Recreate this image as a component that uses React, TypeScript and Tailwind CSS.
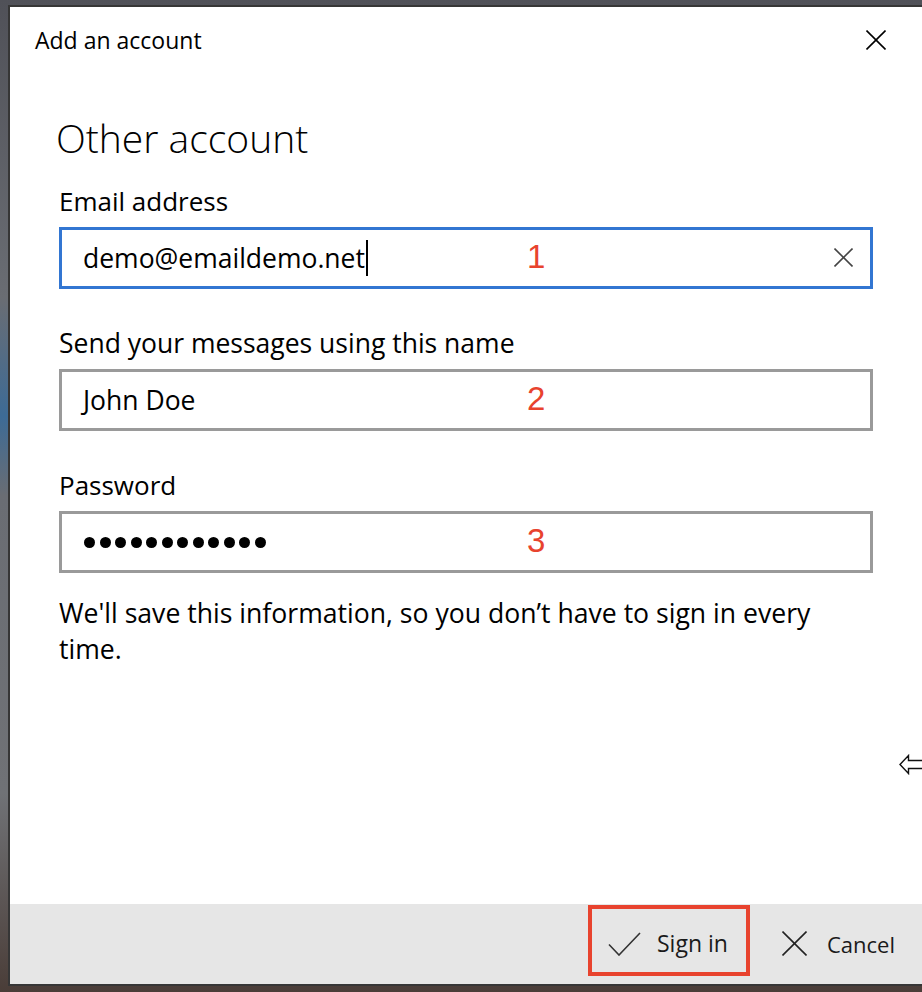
import React from "react";

const font = { fontFamily: '"Open Sans", "Noto Sans", sans-serif' };

function XIcon({ size, stroke, color }: { size: number; stroke: number; color: string }) {
  return (
    <svg width={size} height={size} viewBox={`0 0 ${size} ${size}`} fill="none">
      <line x1="0.5" y1="0.5" x2={size - 0.5} y2={size - 0.5} stroke={color} strokeWidth={stroke} />
      <line x1={size - 0.5} y1="0.5" x2="0.5" y2={size - 0.5} stroke={color} strokeWidth={stroke} />
    </svg>
  );
}

function Field({
  value,
  focused,
  num,
  password,
}: {
  value?: string;
  focused?: boolean;
  num: string;
  password?: boolean;
}) {
  return (
    <div
      className={`relative h-[62px] border-[3px] ${
        focused ? "border-[#3276d2]" : "border-[#9a9a9a]"
      } flex items-center pl-[21px] bg-white`}
    >
      {password ? (
        <div className="flex items-center gap-[4.5px] pl-[1px]">
          {Array.from({ length: 12 }).map((_, i) => (
            <div key={i} className="w-[11px] h-[11px] rounded-full bg-black" />
          ))}
        </div>
      ) : (
        <div className="flex items-center">
          <span className="text-[26.5px] text-black leading-none" style={font}>
            {value}
          </span>
          {focused && <span className="ml-[1px] w-[2px] h-[36px] bg-black" />}
        </div>
      )}
      <span
        className="absolute left-[465px] top-[10px] text-[33px] leading-none text-[#e8432e]"
        style={{ fontFamily: '"Liberation Sans", Arial, sans-serif' }}
      >
        {num}
      </span>
      {focused && (
        <div className="absolute right-[17px] top-[18px]">
          <XIcon size={19} stroke={1.6} color="#444" />
        </div>
      )}
    </div>
  );
}

export default function App() {
  return (
    <div
      className="relative w-[922px] h-[992px] overflow-hidden pt-[5px] pl-[8px]"
      style={{
        background:
          "linear-gradient(180deg, #505158 0%, #6a6d73 30%, #3d6b96 42%, #6a6d73 50%, #707276 80%, #4a3d38 100%)",
      }}
    >
      <div className="w-[914px] h-[981px] border-2 border-r-0 border-[#363636] bg-white flex flex-col">
        {/* title bar */}
        <div className="h-[66px] flex items-center justify-between pl-[25px] pr-[36px] shrink-0">
          <span className="text-[23px] text-black" style={font}>
            Add an account
          </span>
          <XIcon size={20} stroke={1.6} color="#000" />
        </div>

        <div className="px-[49px] flex-1">
          <div className="mt-[40px] h-[48px] flex items-center -ml-[3px]">
            <span className="text-[39px] text-black font-light leading-none" style={font}>
              Other account
            </span>
          </div>

          <div className="mt-[22px] h-[36px] flex items-center">
            <span className="text-[26px] text-black leading-none" style={font}>
              Email address
            </span>
          </div>
          <div className="mt-[8px]">
            <Field value="demo@emaildemo.net" focused num="1" />
          </div>

          <div className="mt-[36px] h-[36px] flex items-center">
            <span className="text-[26.5px] text-black leading-none" style={font}>
              Send your messages using this name
            </span>
          </div>
          <div className="mt-[8px]">
            <Field value="John Doe" num="2" />
          </div>

          <div className="mt-[36px] h-[36px] flex items-center">
            <span className="text-[26px] text-black leading-none" style={font}>
              Password
            </span>
          </div>
          <div className="mt-[8px]">
            <Field password num="3" />
          </div>

          <p className="mt-[22px] text-[26.6px] leading-[36px] text-black whitespace-nowrap" style={font}>
            We'll save this information, so you don’t have to sign in every
            <br />
            time.
          </p>
        </div>

        {/* footer */}
        <div className="h-[80px] bg-[#e6e6e6] shrink-0 flex justify-end items-start pt-[1px] pr-[27px]">
          <div className="w-[162px] h-[71px] border-4 border-[#e8432e] flex items-center pl-[16px] pt-[6px]">
            <svg width="33" height="24" viewBox="0 0 33 24" fill="none">
              <polyline points="1,12.5 11,23 32,1" stroke="#333" strokeWidth="1.6" fill="none" />
            </svg>
            <span className="ml-[16px] text-[23px] text-[#1a1a1a] leading-none" style={font}>
              Sign in
            </span>
          </div>
          <div className="ml-[32px] h-[71px] flex items-center pt-[6px]">
            <XIcon size={25} stroke={1.6} color="#222" />
            <span className="ml-[20px] text-[22px] text-[#1a1a1a] leading-none" style={font}>
              Cancel
            </span>
          </div>
        </div>
      </div>

      {/* cursor arrow at right edge */}
      <svg className="absolute left-[899px] top-[754px]" width="24" height="21" viewBox="0 0 24 21">
        <polygon
          points="1,10.5 9.5,1.5 9.5,6.5 26,6.5 26,14.5 9.5,14.5 9.5,19.5"
          fill="#fff"
          stroke="#111"
          strokeWidth="1.4"
        />
      </svg>
    </div>
  );
}
